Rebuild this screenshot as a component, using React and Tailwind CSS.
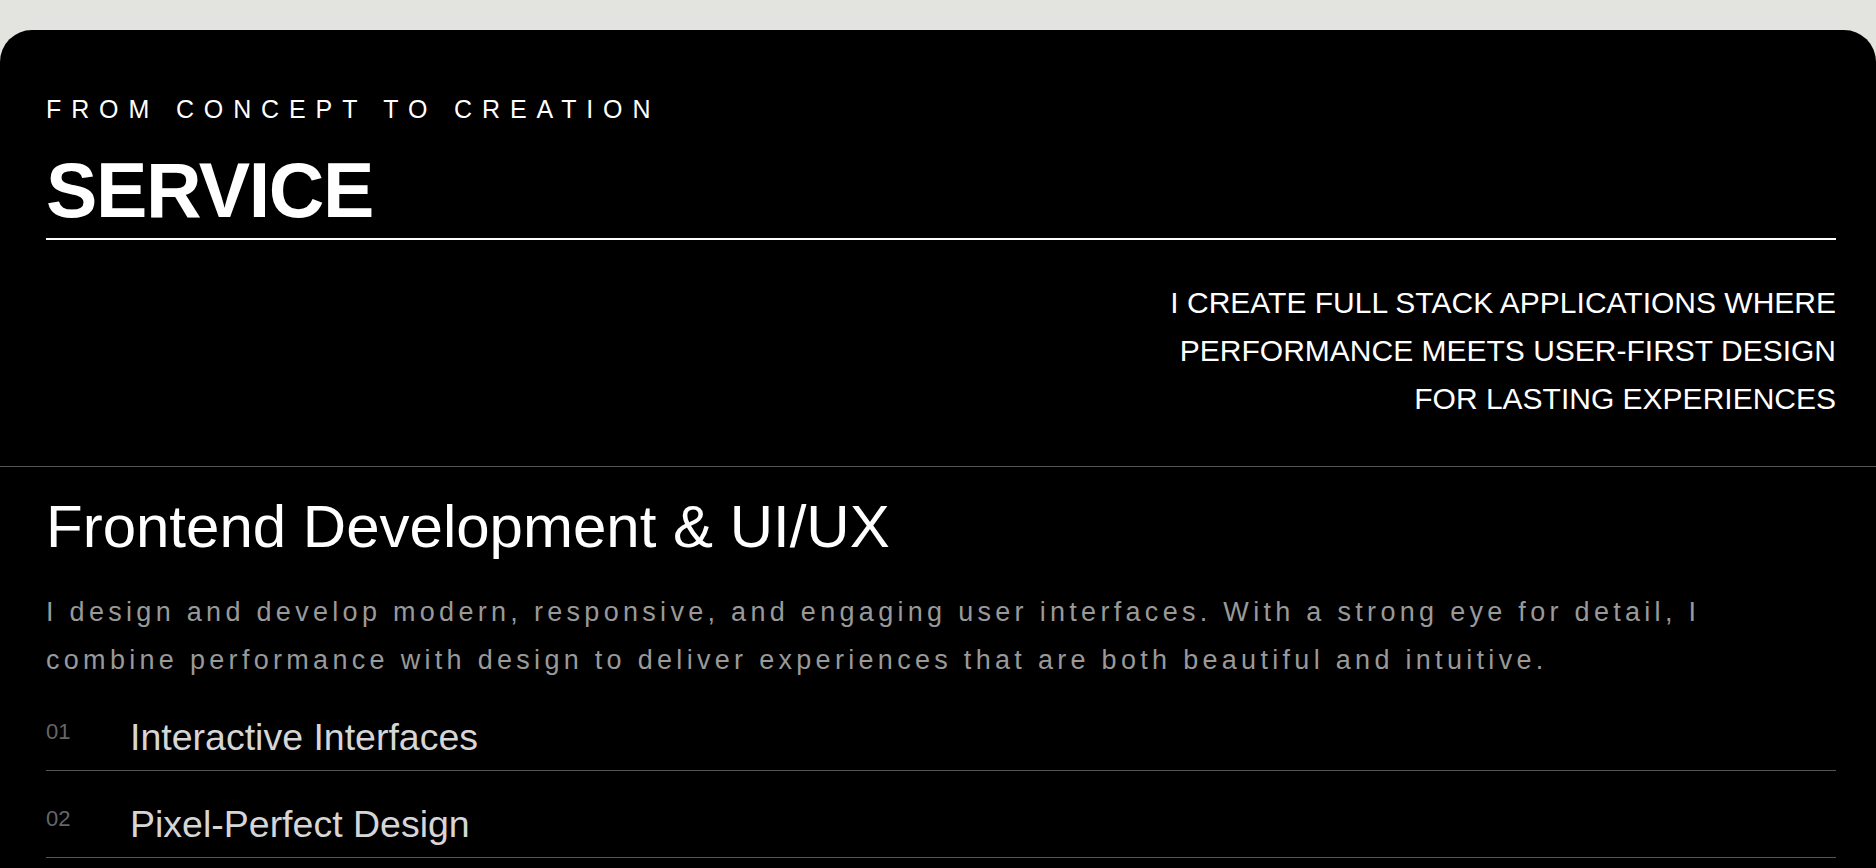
import React from 'react';

const items = [
  { num: '01', title: 'Interactive Interfaces' },
  { num: '02', title: 'Pixel-Perfect Design' },
];

function App() {
  return (
    <div className="min-h-screen bg-[#e3e4df] pt-[30px] font-['Liberation_Sans',Arial,sans-serif]">
      <section className="bg-black text-white rounded-t-[32px] min-h-[838px]">
        {/* header */}
        <div className="pl-[46px] pr-[40px] pt-[67px] pb-[43px]">
          <p className="text-[25px] leading-[25px] tracking-[0.395em] uppercase">From Concept to Creation</p>
          <h1 className="mt-[30px] text-[77px] leading-[77px] font-bold tracking-[-1.4px]">SERVICE</h1>
          <div className="mt-[9px] h-[2px] bg-white" />
          <p className="mt-[39px] ml-auto max-w-[720px] text-right text-[30px] leading-[48px] uppercase">
            I create full stack applications where
            <br />
            performance meets user-first design
            <br />
            for lasting experiences
          </p>
        </div>

        <div className="h-[1px] bg-[#555]" />

        {/* service block */}
        <div className="pl-[46px] pr-[40px] pt-[30px]">
          <h2 className="text-[60px] leading-[60px]">Frontend Development &amp; UI/UX</h2>
          <p className="mt-[31px] max-w-[1720px] text-[27px] leading-[48px] tracking-[4.3px] text-[#999]">
            I design and develop modern, responsive, and engaging user interfaces. With a strong eye for detail, I
            combine performance with design to deliver experiences that are both beautiful and intuitive.
          </p>

          <ul>
            {items.map((item) => (
              <li key={item.num} className="flex pt-[31px] pb-[11px] border-b border-[#555]">
                <span className="w-[84px] shrink-0 mt-[6px] text-[22px] leading-[22px] text-[#666]">{item.num}</span>
                <span className="text-[37.5px] leading-[44px] text-[#d6d6d6]">{item.title}</span>
              </li>
            ))}
          </ul>
        </div>
      </section>
    </div>
  );
}

export default App;
